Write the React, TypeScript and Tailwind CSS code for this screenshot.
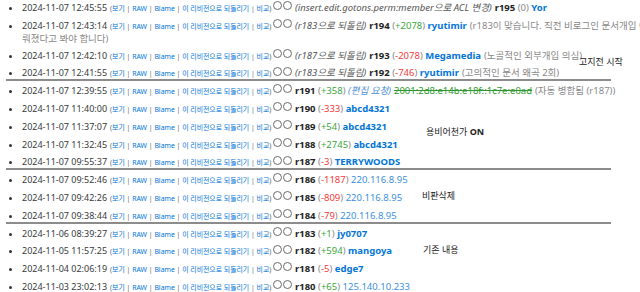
import React from 'react';

type Row = {
  date: string;
  rev: string;
  diff: string;
  user: string;
  ip?: boolean;
  prefix?: string;
  request?: boolean;
  struck?: boolean;
  comment?: string;
  wrap?: string;
};

const groups: { rows: Row[]; note?: React.ReactNode; noteClass?: string }[] = [
  {
    rows: [
      { date: '2024-11-07 12:45:55', prefix: '(insert.edit.gotons.perm:member으로 ACL 변경)', rev: 'r195', diff: '0', user: 'Yor' },
      { date: '2024-11-07 12:43:14', prefix: '(r183으로 되돌림)', rev: 'r194', diff: '+2078', user: 'ryutimir', comment: '(r183이 맞습니다. 직전 비로그인 문서개입 이', wrap: '뤄졌다고 봐야 합니다)' },
      { date: '2024-11-07 12:42:10', prefix: '(r187으로 되돌림)', rev: 'r193', diff: '-2078', user: 'Megamedia', comment: '(노골적인 외부개입 의심)' },
      { date: '2024-11-07 12:41:55', prefix: '(r183으로 되돌림)', rev: 'r192', diff: '-746', user: 'ryutimir', comment: '(고의적인 문서 왜곡 2회)' }
    ],
    note: '고지전 시작',
    noteClass: 'left-[579px] top-[58px]'
  },
  {
    rows: [
      { date: '2024-11-07 12:39:55', rev: 'r191', diff: '+358', request: true, struck: true, ip: true, user: '2001:2d8:e14b:e18f::1c7e:e0ad', comment: '(자동 병합됨 (r187))' },
      { date: '2024-11-07 11:40:00', rev: 'r190', diff: '-333', user: 'abcd4321' },
      { date: '2024-11-07 11:37:07', rev: 'r189', diff: '+54', user: 'abcd4321' },
      { date: '2024-11-07 11:32:45', rev: 'r188', diff: '+2745', user: 'abcd4321' },
      { date: '2024-11-07 09:55:37', rev: 'r187', diff: '-3', user: 'TERRYWOODS' }
    ],
    note: <>용비어천가 <b>ON</b></>,
    noteClass: 'left-[426px] top-[45px]'
  },
  {
    rows: [
      { date: '2024-11-07 09:52:46', rev: 'r186', diff: '-1187', user: '220.116.8.95', ip: true },
      { date: '2024-11-07 09:42:26', rev: 'r185', diff: '-809', user: '220.116.8.95', ip: true },
      { date: '2024-11-07 09:38:44', rev: 'r184', diff: '-79', user: '220.116.8.95', ip: true }
    ],
    note: '비판삭제',
    noteClass: 'left-[422px] top-[20px]'
  },
  {
    rows: [
      { date: '2024-11-06 08:39:27', rev: 'r183', diff: '+1', user: 'jy0707' },
      { date: '2024-11-05 11:57:25', rev: 'r182', diff: '+594', user: 'mangoya' },
      { date: '2024-11-04 02:06:19', rev: 'r181', diff: '-5', user: 'edge7' },
      { date: '2024-11-03 23:02:13', rev: 'r180', diff: '+65', user: '125.140.10.233', ip: true }
    ],
    note: '기존 내용',
    noteClass: 'left-[423px] top-[20px]'
  }
];

function Links() {
  const sep = <span className="text-[#666]"> | </span>;
  return (
    <span className="inline-block w-[163px] text-[6.9px] text-[#0275d8]">
      <span className="text-[#666]">(</span>보기{sep}RAW{sep}Blame{sep}이 리비전으로 되돌리기{sep}비교<span className="text-[#666]">)</span>
    </span>
  );
}

function Radios() {
  return (
    <span className="inline-flex gap-[1px] align-middle mr-[3px] -mt-[2px]">
      <span className="inline-block w-[9px] h-[9px] rounded-full border border-[#6b6b6b] bg-white" />
      <span className="inline-block w-[9px] h-[9px] rounded-full border border-[#6b6b6b] bg-white" />
    </span>
  );
}

function Diff({ diff }: { diff: string }) {
  const color = diff.startsWith('+') ? 'text-[#3aa63a]' : diff.startsWith('-') ? 'text-[#f23a3a]' : 'text-[#888]';
  return (
    <span className="text-[#888]">
      (<span className={color}>{diff}</span>)
    </span>
  );
}

function HistoryRow({ row }: { row: Row }) {
  return (
    <li className="whitespace-nowrap">
      <div className="h-[17.8px] leading-[17.8px]">
        <span className="inline-block w-[88px] text-[9px] text-[#373a3c]">{row.date}</span>
        <Links />
        <Radios />
        <span className="text-[9.5px]">
          {row.prefix && <i className="text-[#555] mr-[3px]">{row.prefix}</i>}
          <b className="text-[#222]">{row.rev}</b>{' '}
          <Diff diff={row.diff} />{' '}
          {row.request && <i className="text-[#4f8fd6] mr-[3px]">(편집 요청)</i>}
          {row.struck ? (
            <span className="text-[#2e9a2e] line-through">{row.user}</span>
          ) : row.ip ? (
            <span className="text-[#3d8fde]">{row.user}</span>
          ) : (
            <b className="text-[#0275d8]">{row.user}</b>
          )}
          {row.comment && <span className="text-[#888] ml-[3px]">{row.comment}</span>}
        </span>
      </div>
      {row.wrap && (
        <div className="h-[12px] leading-[12px] text-[9.5px] text-[#888]">{row.wrap}</div>
      )}
    </li>
  );
}

export default function App() {
  return (
    <div className="w-[640px] h-[292px] overflow-hidden bg-white font-['Noto_Sans','Noto_Sans_CJK_KR',sans-serif]">
      <div className="-mt-[3px]">
        {groups.map((g, i) => (
          <div key={i}>
            {i > 0 && <div className="h-[2px] -my-[1px] ml-[6px] w-[605px] bg-[#8c8c8c] relative" />}
            <div className="relative">
              <ul className="list-disc pl-[22px] marker:text-[9px] marker:text-[#333]">
                {g.rows.map((r) => (
                  <HistoryRow key={r.rev} row={r} />
                ))}
              </ul>
              <div className={`absolute leading-[14px] text-[9px] text-[#222] ${g.noteClass}`}>{g.note}</div>
            </div>
          </div>
        ))}
      </div>
    </div>
  );
}
